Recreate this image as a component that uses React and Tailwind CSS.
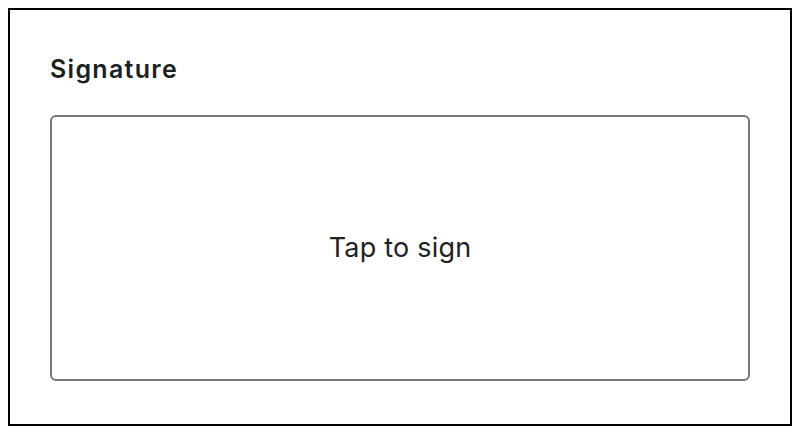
import React from "react";

const App = () => {
  return (
    <div className="w-[800px] h-[432px] bg-white p-2" style={{ fontFamily: "Inter, 'Noto Sans', sans-serif" }}>
      <div className="h-[418px] border-2 border-black px-10 pt-[44px]">
        <h2 className="text-[25px] leading-[30px] font-semibold tracking-[1.3px] text-[#1f1f1f] mb-[31px]">Signature</h2>
        <div className="h-[266px] border-2 border-[#777] rounded-md flex items-center justify-center">
          <span className="text-[27px] text-[#222] tracking-[0.2px]">Tap to sign</span>
        </div>
      </div>
    </div>
  );
};

export default App;
